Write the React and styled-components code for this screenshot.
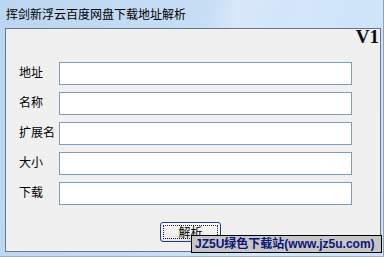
import React from "react";
import styled, { createGlobalStyle } from "styled-components";

const Global = createGlobalStyle`
  html, body { margin: 0; padding: 0; }
  body { width: 384px; height: 257px; overflow: hidden; background: #c4dbf3; }
  * { box-sizing: border-box; }
`;

const cjk = `"Noto Sans CJK SC", "Noto Sans", sans-serif`;

const Window = styled.div`
  position: relative;
  width: 384px;
  height: 257px;
  display: flex;
  flex-direction: column;
  background: linear-gradient(100deg, #bcd6f1 0%, #c6ddf5 45%, #d3e6fa 70%, #cde2f8 100%);
  border-right: 1px solid #8ea3bb;
  border-bottom: 1px solid #a2afbe;
`;

const TitleBar = styled.div`
  height: 28px;
  flex: none;
  display: flex;
  align-items: center;
  padding: 0 0 2px 6px;
  font-family: ${cjk};
  font-size: 12px;
  color: #000;
  background: linear-gradient(100deg, rgba(255,255,255,0) 0%, rgba(255,255,255,0) 55%, rgba(255,255,255,0.25) 62%, rgba(255,255,255,0) 75%);
`;

const Client = styled.div`
  margin: 0 2px 4px 5px;
  flex: 1;
  background: #f0f0f0;
  border: 1px solid #66758a;
  display: flex;
  flex-direction: column;
`;

const VersionTag = styled.div`
  height: 33px;
  flex: none;
  text-align: right;
  padding-right: 1px;
  font-family: "Liberation Serif", serif;
  font-weight: bold;
  font-size: 19px;
  line-height: 16px;
  color: #0a0a14;
`;

const Form = styled.div`
  display: flex;
  flex-direction: column;
  gap: 7px;
`;

const Row = styled.div`
  display: flex;
  align-items: center;
  height: 23px;
  padding-left: 13px;
`;

const Label = styled.span`
  width: 40px;
  flex: none;
  font-family: ${cjk};
  font-size: 12px;
  line-height: 14px;
  padding-bottom: 3px;
  color: #000;
`;

const Field = styled.input`
  width: 293px;
  height: 23px;
  border: 1px solid #7f9db9;
  background: #fff;
  outline: none;
  padding: 0 3px;
  font-family: ${cjk};
  font-size: 12px;
`;

const ButtonRow = styled.div`
  padding: 17px 0 0 154px;
`;

const Button = styled.button`
  position: relative;
  width: 61px;
  height: 20px;
  border: 1px solid #1c3f86;
  border-radius: 3px;
  background: linear-gradient(#fdfdfd 0%, #f2f2f2 50%, #e4e4e4 100%);
  font-family: ${cjk};
  font-size: 12px;
  line-height: 14px;
  color: #000;
  padding: 0 0 1px;
  &::after {
    content: "";
    position: absolute;
    inset: 2px;
    border: 1px dotted #222;
  }
`;

const Watermark = styled.div`
  position: absolute;
  left: 191px;
  top: 235px;
  width: 191px;
  height: 18px;
  border: 1px solid #000;
  background: #c6c6c6;
  color: #0c1477;
  font-family: "Liberation Sans", ${cjk};
  font-weight: bold;
  font-size: 12px;
  line-height: 16px;
  padding-left: 3px;
  white-space: nowrap;
  overflow: hidden;
`;

const fields = ["地址", "名称", "扩展名", "大小", "下载"];

export default function App() {
  return (
    <>
      <Global />
      <Window>
        <TitleBar>挥剑新浮云百度网盘下载地址解析</TitleBar>
        <Client>
          <VersionTag>V1</VersionTag>
          <Form>
            {fields.map((f) => (
              <Row key={f}>
                <Label>{f}</Label>
                <Field type="text" />
              </Row>
            ))}
          </Form>
          <ButtonRow>
            <Button>解析</Button>
          </ButtonRow>
        </Client>
        <Watermark>JZ5U绿色下载站(www.jz5u.com)</Watermark>
      </Window>
    </>
  );
}
